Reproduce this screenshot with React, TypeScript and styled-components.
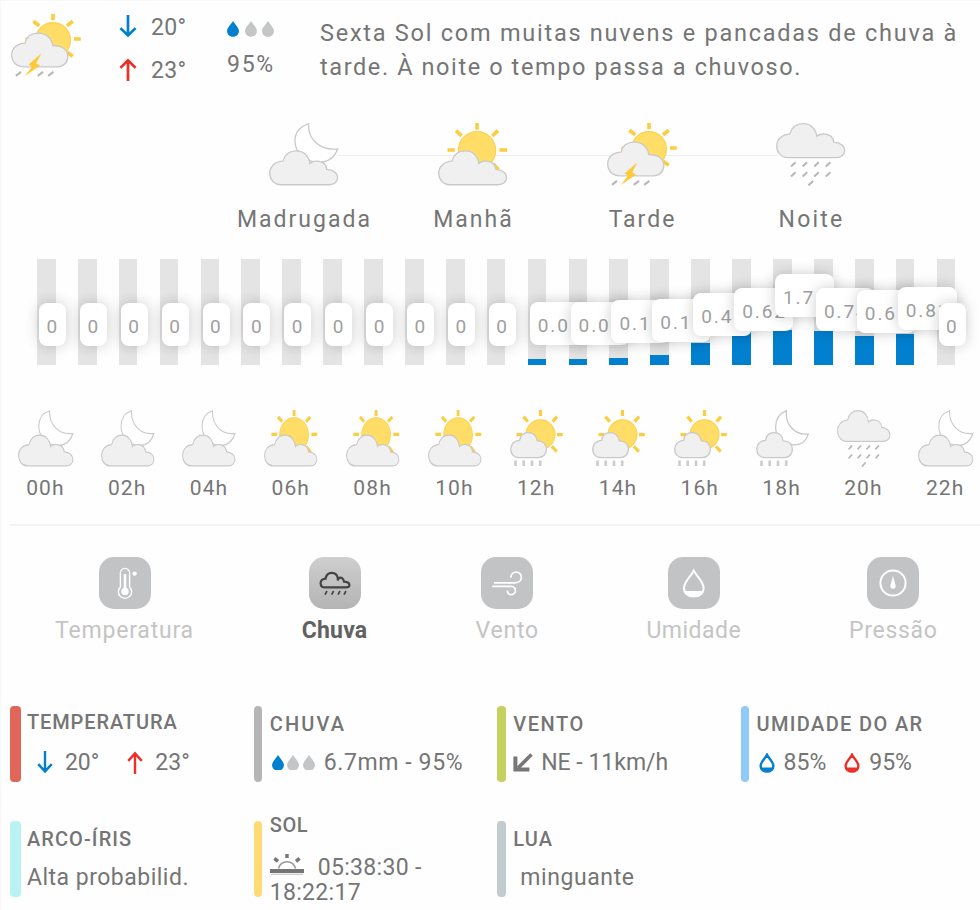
import styled, { createGlobalStyle, css } from "styled-components";

type Weather = "moonCloud" | "sunCloud" | "storm" | "rain" | "sunRain" | "moonRain";

interface IHour {
  mm: string;
  fill: number;
  lift: number;
}

const blue = "#0080cf";
const red = "#ea3028";
const text = "#757575";

const dayParts: { name: string; icon: Weather; spacing: number }[] = [
  { name: "Madrugada", icon: "moonCloud", spacing: 2 },
  { name: "Manhã", icon: "sunCloud", spacing: 2 },
  { name: "Tarde", icon: "storm", spacing: 2 },
  { name: "Noite", icon: "rain", spacing: 2.2 },
];

const hours: IHour[] = [
  ...Array.from({ length: 12 }, () => ({ mm: "0", fill: 0, lift: 19 })),
  { mm: "0.0", fill: 6, lift: 20 },
  { mm: "0.0", fill: 6, lift: 20 },
  { mm: "0.1", fill: 7, lift: 22 },
  { mm: "0.1", fill: 10, lift: 23 },
  { mm: "0.4", fill: 22, lift: 29 },
  { mm: "0.62", fill: 33, lift: 34 },
  { mm: "1.7", fill: 35, lift: 48 },
  { mm: "0.74", fill: 34, lift: 34 },
  { mm: "0.6", fill: 29, lift: 32 },
  { mm: "0.81", fill: 31, lift: 35 },
  { mm: "0", fill: 0, lift: 19 },
];

const hourIcons: { label: string; icon: Weather; width: number }[] = [
  { label: "00h", icon: "moonCloud", width: 56 },
  { label: "02h", icon: "moonCloud", width: 54 },
  { label: "04h", icon: "moonCloud", width: 54 },
  { label: "06h", icon: "sunCloud", width: 54 },
  { label: "08h", icon: "sunCloud", width: 54 },
  { label: "10h", icon: "sunCloud", width: 54 },
  { label: "12h", icon: "sunRain", width: 53 },
  { label: "14h", icon: "sunRain", width: 53 },
  { label: "16h", icon: "sunRain", width: 53 },
  { label: "18h", icon: "moonRain", width: 53 },
  { label: "20h", icon: "rain", width: 54 },
  { label: "22h", icon: "moonCloud", width: 56 },
];

const cloudProps = { fill: "#f0f0f0", stroke: "#c9c9c9", strokeWidth: 1.3 };

const BigCloud = ({ y = 0 }: { y?: number }) => (
  <path
    {...cloudProps}
    transform={`translate(0 ${y})`}
    d="M12 60.8C5 60.8 .7 55.5 .7 49.3C.7 43 6 38 13.8 37.6C15.6 31.2 20.5 27.4 27.4 27.4C34.4 27.4 40 32.4 40.8 39.8C43 38 46 37.3 49 37.6C54 38 57.2 41 57.8 45.6C64.4 46 68.6 49.4 68.6 53.8C68.6 58 65 60.8 60 60.8Z"
  />
);

const Rays = ({ d, width = 3.6 }: { d: string; width?: number }) => (
  <path d={d} stroke="#fdcc3f" strokeWidth={width} fill="none" />
);

const Sun = ({ cx, cy, r }: { cx: number; cy: number; r: number }) => (
  <circle cx={cx} cy={cy} r={r} fill="#ffdd66" stroke="#fcd250" strokeWidth="1.2" />
);

const SmallCloud = () => (
  <path
    {...cloudProps}
    d="M9 46.8C3.6 46.8 .7 43 .7 38.4C.7 33.6 4.4 30 9.6 29.8C10.4 25 13.8 22.2 18 22.2C22.8 22.2 26.4 25.4 27.2 30.4C32.8 30.6 36.4 33.4 36.4 38.6C36.4 43.4 33 46.8 28.4 46.8Z"
  />
);

const Drizzle = () => (
  <path d="M5.5 49.5v5.5M13.7 49.5v5.5M22 49.5v5.5M30.2 49.5v5.5" stroke="#cccccc" strokeWidth="2.6" />
);

const drawings: Record<Weather, { box: string; art: React.ReactNode }> = {
  moonCloud: {
    box: "0 0 70 62",
    art: (
      <>
        <path
          d="M39.6 .8C38.6 15 50 27.4 68.6 25.6C65.4 34 58.6 38.6 50 38.6C36 38.6 26 29 26 17.6C26 9 31.4 3.2 39.6 .8Z"
          fill="#fff"
          stroke="#c9c9c9"
          strokeWidth="1.3"
        />
        <BigCloud />
      </>
    ),
  },
  sunCloud: {
    box: "0 0 70 62",
    art: (
      <>
        <Rays d="M39 0V6.6M9.5 26.6H16.8M61.4 26.6H69M18 7.6L23.6 12.6M60 7.6L54.4 12.6M55 40L60.5 46" />
        <Sun cx={39} cy={27} r={18.6} />
        <BigCloud />
      </>
    ),
  },
  storm: {
    box: "0 0 70 62",
    art: (
      <>
        <Rays d="M42 0V6.2M14.4 25H21M63 24.6H69.8M22.4 7.2L28.2 11.6M61.8 7.2L56 11.6M56 37.6L61.8 41.6" />
        <Sun cx={42} cy={25.8} r={17.4} />
        <path
          {...cloudProps}
          d="M13 52C5 52 .7 46.6 .7 40.2C.7 33.6 6.4 28.8 14 28.6C15.4 22.6 20.4 18.8 27.4 18.8C35 18.8 40.6 23.6 41.8 31C50.8 31.2 56.8 35 56.8 41.8C56.8 48 52.4 52 46 52Z"
        />
        <path d="M10 57L5 61M32 57L26.8 61M42.4 57L37.2 61" stroke="#b8b8b8" strokeWidth="2.2" />
        <path d="M30.4 38.6L17.6 49.6L21 51.6L14 61L29 50.8L25.2 48.4Z" fill="#fdca36" />
      </>
    ),
  },
  rain: {
    box: "0 0 70 62",
    art: (
      <>
        <BigCloud y={-26.7} />
        <path
          d="M19.6 38.6L15 42.8M31.2 38.6L26.6 42.8M42.8 38.6L38.2 42.8M54.4 38.6L49.8 42.8M19.6 48.4L15 52.6M31.2 48.4L26.6 52.6M42.8 48.4L38.2 52.6M54.4 48.4L49.8 52.6M37.2 57L32.4 61.4"
          stroke="#b8b8b8"
          strokeWidth="2.1"
        />
      </>
    ),
  },
  sunRain: {
    box: "0 0 53 56",
    art: (
      <>
        <Rays
          width={3.2}
          d="M30.5 0V6M6.5 24.2H12M47 24.2H52.8M13.4 6.6L17.8 11.4M47 6.6L42.6 11.4M41.8 35.8L46.8 40.8"
        />
        <Sun cx={30.5} cy={24} r={14.4} />
        <SmallCloud />
        <Drizzle />
      </>
    ),
  },
  moonRain: {
    box: "0 0 53 56",
    art: (
      <>
        <path
          d="M30.4 .7C29 13 38 25.4 52.4 23.4C50.6 30 45.4 34.2 38.4 34.2C28 34.2 19.6 27.4 19.6 17C19.6 9.4 23.6 3.4 30.4 .7Z"
          fill="#fff"
          stroke="#c9c9c9"
          strokeWidth="1.3"
        />
        <SmallCloud />
        <Drizzle />
      </>
    ),
  },
};

const WeatherIcon = ({ icon, width, height }: { icon: Weather; width: number; height: number }) => (
  <svg width={width} height={height} viewBox={drawings[icon].box} preserveAspectRatio="none">
    {drawings[icon].art}
  </svg>
);

const Arrow = ({ up, width, height }: { up?: boolean; width: number; height: number }) => (
  <svg width={width} height={height} viewBox="0 0 18 24" fill="none" preserveAspectRatio="none">
    <path
      d={up ? "M9 24V2.4M1.4 10.4L9 2.4L16.6 10.4" : "M9 0V21.4M1.4 13.6L9 21.4L16.6 13.6"}
      stroke={up ? red : blue}
      strokeWidth="2.7"
    />
  </svg>
);

const Drops = ({ size, gap }: { size: number; gap: number }) => (
  <DropRow gap={gap}>
    {[blue, "#c4c5c7", "#c4c5c7"].map((color, i) => (
      <svg key={i} width={size} height={size * 1.32} viewBox="0 0 12 16">
        <path d="M6 0C8 3.4 12 6.6 12 10.2C12 13.6 9.4 16 6 16C2.6 16 0 13.6 0 10.2C0 6.6 4 3.4 6 0Z" fill={color} />
      </svg>
    ))}
  </DropRow>
);

const HumidityDrop = ({ color }: { color: string }) => (
  <svg width="16" height="20" viewBox="0 0 16 20">
    <path
      d="M8 1.8C9.6 5.2 14.4 9 14.4 12.8C14.4 16.4 11.6 18.6 8 18.6C4.4 18.6 1.6 16.4 1.6 12.8C1.6 9 6.4 5.2 8 1.8Z"
      fill="#fff"
      stroke={color}
      strokeWidth="2.4"
    />
    <path d="M1.6 14.6H14.4C13.8 17.4 11.4 19 8 19C4.6 19 2.2 17.4 1.6 14.6Z" fill={color} />
  </svg>
);

const tabs = [
  {
    name: "Temperatura",
    width: 137,
    spacing: 0.8,
    art: (
      <g stroke="#fff" fill="none" strokeWidth="1.4">
        <path d="M21.4 30V16a4.6 4.6 0 0 1 9.2 0V30a6.6 6.6 0 1 1 -9.2 0Z" />
        <path d="M26 17V34" strokeWidth="2.6" />
        <circle cx="26" cy="34.4" r="3" fill="#fff" />
        <circle cx="35.6" cy="16.6" r="1.5" fill="#fff" />
      </g>
    ),
  },
  {
    name: "Chuva",
    width: 66,
    spacing: 0.2,
    active: true,
    art: (
      <g stroke="#444" fill="none">
        <path
          strokeWidth="2.2"
          d="M16 30.4C13 30.4 11.6 28.4 11.6 26.2C11.6 23.4 13.8 21.6 16.6 21.6C17.2 18 19.6 15.8 22.8 15.8C26 15.8 28.4 18 28.8 21.4V23.4L30 20.8C32.6 20 34.6 21.6 35 24.6C38 24.8 40.4 26 40.4 28C40.4 29.6 39 30.4 37 30.4Z"
        />
        <path strokeWidth="1.7" d="M18 34L16 37.6M24.6 34L22.6 37.6M31 34L29 37.6M37 34L35 37.6" />
      </g>
    ),
  },
  {
    name: "Vento",
    width: 62,
    spacing: 0.8,
    art: (
      <g stroke="#fff" fill="none" strokeWidth="1.7">
        <path d="M13 25.8H33.4C37.6 25.8 40.4 23.6 40.4 20.4C40.4 17.4 38.2 15.2 35.2 15.2C32.2 15.2 29.8 17.2 29.8 20.8" />
        <path d="M11.2 29.4H30C32.8 29.4 34.4 31.4 34.4 33.6C34.4 36 32.6 37.6 30.4 37.6C28 37.6 26.4 36 26.4 33.4" />
      </g>
    ),
  },
  {
    name: "Umidade",
    width: 94,
    spacing: 0.5,
    art: (
      <g stroke="#fff" strokeWidth="2" fill="none">
        <path d="M25.8 13.6C28.4 19 35.6 24.6 35.6 31C35.6 36.4 31.6 39.6 25.8 39.6C20 39.6 16 36.4 16 31C16 24.6 23.2 19 25.8 13.6Z" />
        <path d="M16.6 34H35C34 38 30.6 40 25.8 40C21 40 17.6 38 16.6 34Z" fill="#fff" stroke="none" />
      </g>
    ),
  },
  {
    name: "Pressão",
    width: 88,
    spacing: 0.7,
    art: (
      <g>
        <circle cx="26" cy="26" r="12.6" fill="none" stroke="#fff" strokeWidth="2" />
        <path d="M26 19L28.6 28.4A2.7 2.7 0 1 1 23.4 28.4Z" fill="#fff" />
      </g>
    ),
  },
];

export default function App() {
  return (
    <>
      <GlobalStyle />
      <Forecast>
        <Summary>
          <WeatherIcon icon="storm" width={70} height={63} />
          <Temps>
            <TempRow>
              <Arrow width={18} height={23} />
              <Value spacing={0.3}>20°</Value>
            </TempRow>
            <TempRow>
              <Arrow up width={18} height={23} />
              <Value spacing={0.3}>23°</Value>
            </TempRow>
          </Temps>
          <Chance>
            <Drops size={12} gap={5.5} />
            <Value spacing={1.7}>95%</Value>
          </Chance>
          <Description>
            <Line spacing={1.75}>Sexta Sol com muitas nuvens e pancadas de chuva à</Line>
            <Line spacing={1.6}>tarde. À noite o tempo passa a chuvoso.</Line>
          </Description>
        </Summary>

        <DayParts>
          {dayParts.map((part) => (
            <DayPart key={part.name}>
              <WeatherIcon icon={part.icon} width={70} height={63} />
              <PartName spacing={part.spacing}>{part.name}</PartName>
            </DayPart>
          ))}
        </DayParts>

        <Chart>
          {hours.map((hour, i) => (
            <Track key={i}>
              <Fill style={{ height: hour.fill }} />
              <Bubble wide={hour.fill > 0} style={{ bottom: hour.lift }}>
                {hour.mm}
              </Bubble>
            </Track>
          ))}
        </Chart>

        <HourRow>
          {hourIcons.map((hour) => (
            <Hour key={hour.label}>
              <WeatherIcon icon={hour.icon} width={hour.width} height={57} />
              <HourLabel>{hour.label}</HourLabel>
            </Hour>
          ))}
        </HourRow>

        <Tabs>
          {tabs.map((tab) => (
            <Tab key={tab.name} width={tab.width}>
              <TabIcon active={tab.active}>
                <svg width="52" height="52" viewBox="0 0 52 52">
                  {tab.art}
                </svg>
              </TabIcon>
              <TabName active={tab.active} spacing={tab.spacing}>
                {tab.name}
              </TabName>
            </Tab>
          ))}
        </Tabs>

        <Cards>
          <Card>
            <Stripe color="#e0665a" wide />
            <CardBody>
              <Title raised={2} spacing={0.9}>TEMPERATURA</Title>
              <CardRow indent={10}>
                <Arrow width={16} height={23} />
                <CardValue before={12}>20°</CardValue>
                <Gap size={28} />
                <Arrow up width={16} height={23} />
                <CardValue before={12}>23°</CardValue>
              </CardRow>
            </CardBody>
          </Card>
          <Card>
            <Stripe color="#b5b5b5" />
            <CardBody>
              <Title spacing={2.1}>CHUVA</Title>
              <CardRow indent={2}>
                <Drops size={12} gap={3.5} />
                <CardValue before={9} spacing={0.6}>6.7mm - 95%</CardValue>
              </CardRow>
            </CardBody>
          </Card>
          <Card>
            <Stripe color="#c5d25d" />
            <CardBody>
              <Title spacing={1.6}>VENTO</Title>
              <CardRow>
                <svg width="20" height="20" viewBox="0 0 20 20" fill="none">
                  <path d="M18.5 1.5L5 15" stroke="#777" strokeWidth="3.6" />
                  <path d="M2.4 3.5V16.4H16.4" stroke="#777" strokeWidth="4" />
                </svg>
                <CardValue before={8}>NE - 11km/h</CardValue>
              </CardRow>
            </CardBody>
          </Card>
          <Card>
            <Stripe color="#8fcaf8" />
            <CardBody>
              <Title spacing={1.35}>UMIDADE DO AR</Title>
              <CardRow indent={2}>
                <HumidityDrop color={blue} />
                <CardValue before={9}>85%</CardValue>
                <Gap size={18} />
                <HumidityDrop color={red} />
                <CardValue before={9}>95%</CardValue>
              </CardRow>
            </CardBody>
          </Card>
          <Card>
            <Stripe color="#b9f2f2" wide />
            <CardBody>
              <Title spacing={1.1}>ARCO-ÍRIS</Title>
              <CardRow>
                <CardValue spacing={0.5}>Alta probabilid.</CardValue>
              </CardRow>
            </CardBody>
          </Card>
          <Card>
            <Stripe color="#ffdb75" />
            <CardBody>
              <Title raised={14} spacing={0.5}>SOL</Title>
              <SunTimes>
                <svg width="34" height="21" viewBox="0 0 34 21">
                  <path d="M0 17H34" stroke="#757575" strokeWidth="4.2" />
                  <path d="M1 20.4H33" stroke="#ccc" strokeWidth="1.4" />
                  <path
                    d="M8.4 14.4C10 9.6 13.2 7.8 17 7.8C20.8 7.8 24 9.6 25.6 14.4"
                    stroke="#999"
                    strokeWidth="1.6"
                    fill="none"
                  />
                  <path d="M17 0V4M4.4 4.4L8 7.4M29.6 4.4L26 7.4" stroke="#777" strokeWidth="3.4" />
                </svg>
                <CardValue before={14} spacing={0.3}>05:38:30 -</CardValue>
                <br />
                <CardValue spacing={0.3}>18:22:17</CardValue>
              </SunTimes>
            </CardBody>
          </Card>
          <Card>
            <Stripe color="#c1cbd0" />
            <CardBody>
              <Title spacing={1.2}>LUA</Title>
              <CardRow indent={7}>
                <CardValue spacing={0.6}>minguante</CardValue>
              </CardRow>
            </CardBody>
          </Card>
        </Cards>
      </Forecast>
    </>
  );
}

const GlobalStyle = createGlobalStyle`
  body {
    margin: 0;
    background: #fefefe;
    overflow: hidden;
  }
  svg {
    display: block;
    flex: none;
  }
`;

const spaced = css<{ spacing?: number }>`
  letter-spacing: ${(props) => props.spacing || 0}px;
  white-space: nowrap;
`;

const Forecast = styled.main`
  box-sizing: border-box;
  width: 980px;
  height: 910px;
  overflow: hidden;
  border-top: 1px solid #f8f8f8;
  border-left: 1px solid #f8f8f8;
  color: ${text};
  font-family: Roboto, "Liberation Sans", sans-serif;
  font-size: 23px;
`;

const Summary = styled.header`
  display: flex;
  align-items: flex-start;
  height: 122px;
  padding-left: 10px;
  box-sizing: border-box;
  > svg {
    margin-top: 13px;
  }
`;

const Temps = styled.div`
  width: 107px;
  padding: 4px 0 0 38px;
  box-sizing: border-box;
`;

const TempRow = styled.div`
  display: flex;
  align-items: center;
  height: 43px;
  gap: 14px;
`;

const Value = styled.span<{ spacing?: number }>`
  padding-top: 2px;
  line-height: 43px;
  ${spaced}
`;

const Chance = styled.div`
  width: 132px;
  padding: 20px 0 0 39px;
  box-sizing: border-box;
  ${Value} {
    display: block;
    margin-top: 4px;
  }
`;

const DropRow = styled.div<{ gap: number }>`
  display: flex;
  gap: ${(props) => props.gap}px;
`;

const Description = styled.p`
  margin: 16px 0 0;
  font-size: 23.5px;
  line-height: 33.5px;
`;

const Line = styled.span<{ spacing?: number }>`
  display: block;
  ${spaced}
`;

const DayParts = styled.section`
  display: grid;
  grid-template-columns: repeat(4, 169px);
  height: 136px;
  padding-left: 218px;
  background: linear-gradient(#eee, #eee) 337px 32px / 440px 1px no-repeat;
`;

const DayPart = styled.div`
  display: flex;
  flex-direction: column;
  align-items: center;
`;

const PartName = styled.span<{ spacing?: number }>`
  margin: 19px 0 0 2px;
  line-height: 30px;
  ${spaced}
`;

const Chart = styled.section`
  display: grid;
  grid-template-columns: repeat(23, 40.9px);
  height: 151px;
  padding-left: 36px;
  box-sizing: border-box;
`;

const Track = styled.div`
  position: relative;
  display: flex;
  align-items: flex-end;
  width: 18.7px;
  height: 105.5px;
  background: #e4e4e4;
`;

const Fill = styled.div`
  width: 100%;
  background: ${blue};
`;

const Bubble = styled.span<{ wide?: boolean }>`
  position: absolute;
  left: 2px;
  z-index: 1;
  width: ${(props) => (props.wide ? 59 : 27)}px;
  padding: 4px 0 0 ${(props) => (props.wide ? 8 : 7.5)}px;
  box-sizing: border-box;
  border-radius: 8px;
  background: #fff;
  box-shadow: 0 0 14px rgba(0, 0, 0, 0.2);
  color: #a0a0a0;
  font-size: 19px;
  line-height: 39px;
  letter-spacing: 1.9px;
`;

const HourRow = styled.section`
  display: grid;
  grid-template-columns: repeat(12, 81.8px);
  height: 114px;
  margin-right: -10px;
  padding-left: 4px;
`;

const Hour = styled.div`
  display: flex;
  flex-direction: column;
  align-items: center;
`;

const HourLabel = styled.span`
  margin: 7px 1px 0 0;
  font-size: 21px;
  line-height: 28px;
  letter-spacing: 1.1px;
`;

const Tabs = styled.nav`
  display: flex;
  gap: 108.6px;
  height: 182px;
  margin-left: 9px;
  padding: 31px 0 0 46px;
  border-top: 2px solid #f3f3f3;
  box-sizing: border-box;
`;

const Tab = styled.div<{ width: number }>`
  display: flex;
  flex: none;
  flex-direction: column;
  align-items: center;
  width: ${(props) => props.width}px;
`;

const TabIcon = styled.div<{ active?: boolean }>`
  width: 52px;
  height: 52px;
  border-radius: 15px;
  background: ${(props) => (props.active ? "linear-gradient(#d0cecf, #b4b4b4)" : "#c2c3c5")};
`;

const TabName = styled.span<{ active?: boolean; spacing?: number }>`
  margin-top: 7px;
  color: ${(props) => (props.active ? "#616161" : "#c4c4c4")};
  font-weight: ${(props) => (props.active ? 700 : 400)};
  line-height: 30px;
  ${spaced}
`;

const Cards = styled.section`
  display: grid;
  grid-template-columns: repeat(4, 243.4px);
  grid-auto-rows: 115px;
  padding-left: 9.4px;
`;

const Card = styled.article`
  display: flex;
  height: 76px;
`;

const Stripe = styled.div<{ color: string; wide?: boolean }>`
  flex: none;
  width: ${(props) => (props.wide ? 10.5 : 8.5)}px;
  margin-right: ${(props) => (props.wide ? 6 : 7.5)}px;
  border-radius: 4px;
  background: ${(props) => props.color};
`;

const CardBody = styled.div`
  min-width: 0;
`;

// a raised title moves up while the row below stays put
const Title = styled.h3<{ raised?: number; spacing?: number }>`
  margin: ${(props) => 5 - (props.raised || 0)}px 0 0;
  padding-bottom: ${(props) => props.raised || 0}px;
  font-size: 20px;
  font-weight: 500;
  line-height: 26px;
  ${spaced}
`;

const CardRow = styled.div<{ indent?: number }>`
  display: flex;
  align-items: center;
  height: 51px;
  padding-left: ${(props) => props.indent || 0}px;
`;

const CardValue = styled.span<{ before?: number; spacing?: number }>`
  margin-left: ${(props) => props.before || 0}px;
  ${spaced}
`;

const Gap = styled.span<{ size: number }>`
  width: ${(props) => props.size}px;
`;

const SunTimes = styled.div`
  margin-top: 2px;
  line-height: 24.5px;
  svg {
    display: inline-block;
  }
`;
